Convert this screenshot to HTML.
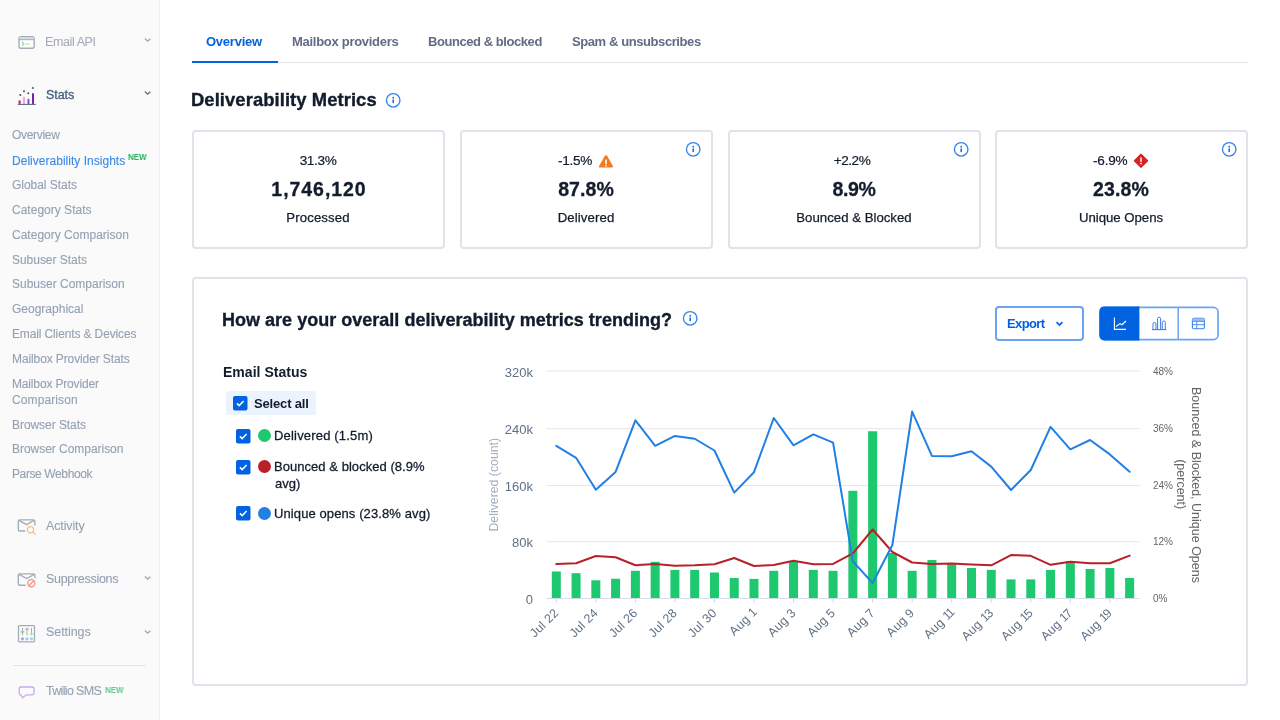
<!DOCTYPE html>
<html><head><meta charset="utf-8"><style>
html,body{margin:0;padding:0;width:1280px;height:720px;overflow:hidden;background:#fff;}
body{position:relative;font-family:"Liberation Sans",sans-serif;}
.t{position:absolute;white-space:nowrap;}
body>div,body>svg{will-change:transform;}
</style></head><body>
<div style="position:absolute;left:0px;top:0px;width:159px;height:720px;background:#fafafa;"></div>
<div style="position:absolute;left:159px;top:0px;width:1px;height:720px;background:#eceef2;"></div>
<svg style="position:absolute;left:17px;top:35px" width="19" height="16" viewBox="0 0 19 16"><rect x="2.05" y="1.7" width="15.1" height="11.6" rx="1.8" fill="#fff" stroke="#a3adb9" stroke-width="1.4"/><rect x="2.4" y="2.2" width="14.4" height="2.5" fill="#d6dbe1"/><line x1="1.6" y1="4.7" x2="17.6" y2="4.7" stroke="#a3adb9" stroke-width="1"/><path d="M4.8 6.8 L6.9 8.7 L4.8 10.6" fill="none" stroke="#93dcaa" stroke-width="1.3"/><line x1="8.8" y1="9" x2="12.7" y2="9" stroke="#cfe6a8" stroke-width="1.4"/></svg>
<div class="t" style="top:35.92px;font-size:12.5px;line-height:12.5px;color:#a3adba;letter-spacing:-0.400px;left:44.60px;-webkit-text-stroke-width:0.1px;">Email API</div>
<svg style="position:absolute;left:144px;top:37px" width="8" height="6" viewBox="0 0 8 6"><path d="M0.9 1.6 L3.6 4.2 L6.4 1.8" fill="none" stroke="#9ba6b4" stroke-width="1.35"/></svg>
<svg style="position:absolute;left:17px;top:86px" width="20" height="20" viewBox="0 0 20 20"><rect x="1.5" y="14.2" width="2.2" height="4" rx="1" fill="#f2245f"/><rect x="6" y="10.8" width="2" height="7.4" rx="1" fill="#e2a6ea"/><rect x="10.5" y="12.7" width="1.9" height="5.5" rx="0.9" fill="#7a44f5"/><rect x="15" y="7" width="2" height="11.2" rx="1" fill="#7b1fa8"/><circle cx="3.3" cy="9" r="1.05" fill="#4a5a6e"/><circle cx="7" cy="5.3" r="1.05" fill="#4a5a6e"/><circle cx="11.3" cy="7.2" r="1.05" fill="#4a5a6e"/><circle cx="15.8" cy="2" r="1.05" fill="#4a5a6e"/><line x1="0.8" y1="18.4" x2="18.8" y2="18.4" stroke="#4a5a6e" stroke-width="0.95"/></svg>
<div class="t" style="top:89.42px;font-size:12.5px;line-height:12.5px;color:#4b6080;letter-spacing:-0.059px;left:45.60px;-webkit-text-stroke-width:0.35px;">Stats</div>
<svg style="position:absolute;left:144px;top:90px" width="8" height="6" viewBox="0 0 8 6"><path d="M0.9 1.6 L3.6 4.2 L6.4 1.8" fill="none" stroke="#5b6c80" stroke-width="1.35"/></svg>
<div class="t" style="top:129.24px;font-size:12px;line-height:12px;color:#94a1b2;letter-spacing:-0.306px;left:11.80px;-webkit-text-stroke-width:0.12px;">Overview</div>
<div class="t" style="top:154.64px;font-size:12px;line-height:12px;color:#3d8ae6;letter-spacing:0.022px;left:11.80px;-webkit-text-stroke-width:0.12px;">Deliverability Insights</div>
<div class="t" style="top:179.04px;font-size:12px;line-height:12px;color:#94a1b2;letter-spacing:-0.033px;left:11.80px;-webkit-text-stroke-width:0.12px;">Global Stats</div>
<div class="t" style="top:203.84px;font-size:12px;line-height:12px;color:#94a1b2;letter-spacing:0.010px;left:11.80px;-webkit-text-stroke-width:0.12px;">Category Stats</div>
<div class="t" style="top:228.74px;font-size:12px;line-height:12px;color:#94a1b2;letter-spacing:0.011px;left:11.80px;-webkit-text-stroke-width:0.12px;">Category Comparison</div>
<div class="t" style="top:253.54px;font-size:12px;line-height:12px;color:#94a1b2;letter-spacing:-0.031px;left:11.80px;-webkit-text-stroke-width:0.12px;">Subuser Stats</div>
<div class="t" style="top:278.44px;font-size:12px;line-height:12px;color:#94a1b2;letter-spacing:-0.003px;left:11.80px;-webkit-text-stroke-width:0.12px;">Subuser Comparison</div>
<div class="t" style="top:303.24px;font-size:12px;line-height:12px;color:#94a1b2;letter-spacing:0.003px;left:11.80px;-webkit-text-stroke-width:0.12px;">Geographical</div>
<div class="t" style="top:328.14px;font-size:12px;line-height:12px;color:#94a1b2;letter-spacing:-0.131px;left:11.80px;-webkit-text-stroke-width:0.12px;">Email Clients &amp; Devices</div>
<div class="t" style="top:352.94px;font-size:12px;line-height:12px;color:#94a1b2;letter-spacing:-0.109px;left:11.80px;-webkit-text-stroke-width:0.12px;">Mailbox Provider Stats</div>
<div class="t" style="top:377.84px;font-size:12px;line-height:12px;color:#94a1b2;letter-spacing:-0.158px;left:11.80px;-webkit-text-stroke-width:0.12px;">Mailbox Provider</div>
<div class="t" style="top:393.74px;font-size:12px;line-height:12px;color:#94a1b2;letter-spacing:0.109px;left:11.80px;-webkit-text-stroke-width:0.12px;">Comparison</div>
<div class="t" style="top:418.54px;font-size:12px;line-height:12px;color:#94a1b2;letter-spacing:-0.057px;left:11.80px;-webkit-text-stroke-width:0.12px;">Browser Stats</div>
<div class="t" style="top:443.44px;font-size:12px;line-height:12px;color:#94a1b2;letter-spacing:-0.036px;left:11.80px;-webkit-text-stroke-width:0.12px;">Browser Comparison</div>
<div class="t" style="top:468.24px;font-size:12px;line-height:12px;color:#94a1b2;letter-spacing:-0.388px;left:11.80px;-webkit-text-stroke-width:0.12px;">Parse Webhook</div>
<div class="t" style="top:152.72px;font-size:8.6px;line-height:8.6px;color:#22b35e;font-weight:700;left:128.10px;transform:scaleX(0.92);transform-origin:0 0;">NEW</div>
<svg style="position:absolute;left:16px;top:517px" width="22" height="20" viewBox="0 0 22 20"><path d="M9.3 14 H3.8 Q2.3 14 2.3 12.5 V4.3 Q2.3 2.8 3.8 2.8 H17.3 Q18.8 2.8 18.8 4.3 V8.5" fill="none" stroke="#a3adb9" stroke-width="1.35"/><path d="M3 3.3 L10.5 7.7 L18 3.3" fill="none" stroke="#a3adb9" stroke-width="1.35"/><circle cx="14.5" cy="12.7" r="3.1" fill="none" stroke="#f7bf88" stroke-width="1.2"/><line x1="16.8" y1="15" x2="19.2" y2="17.3" stroke="#f7bf88" stroke-width="1.3" stroke-linecap="round"/></svg>
<div class="t" style="top:520.22px;font-size:12.5px;line-height:12.5px;color:#94a1b2;letter-spacing:-0.134px;left:45.60px;-webkit-text-stroke-width:0.1px;">Activity</div>
<svg style="position:absolute;left:16px;top:570px" width="22" height="20" viewBox="0 0 22 20"><path d="M9.7 15.2 H3.8 Q2.3 15.2 2.3 13.7 V5.3 Q2.3 3.8 3.8 3.8 H17.5 Q19 3.8 19 5.3 V8.2" fill="none" stroke="#a3adb9" stroke-width="1.35"/><path d="M3 4.3 L10.7 8.5 L18.3 4.3" fill="none" stroke="#a3adb9" stroke-width="1.35"/><circle cx="15.3" cy="13.3" r="3.6" fill="none" stroke="#f0917f" stroke-width="1.2"/><line x1="13.1" y1="15.5" x2="17.6" y2="11" stroke="#f0917f" stroke-width="1.2"/></svg>
<div class="t" style="top:573.42px;font-size:12.5px;line-height:12.5px;color:#94a1b2;letter-spacing:-0.299px;left:45.60px;-webkit-text-stroke-width:0.1px;">Suppressions</div>
<svg style="position:absolute;left:144px;top:575px" width="8" height="6" viewBox="0 0 8 6"><path d="M0.9 1.6 L3.6 4.2 L6.4 1.8" fill="none" stroke="#9ba6b4" stroke-width="1.35"/></svg>
<svg style="position:absolute;left:17px;top:624px" width="20" height="20" viewBox="0 0 20 20"><rect x="1.5" y="1.7" width="16" height="16.1" rx="0.8" fill="none" stroke="#a3adb9" stroke-width="1.3"/><line x1="5.5" y1="4" x2="5.5" y2="11.3" stroke="#a3adb9" stroke-width="1"/><line x1="10" y1="4" x2="10" y2="11.3" stroke="#a3adb9" stroke-width="1"/><line x1="14.5" y1="4" x2="14.5" y2="11.3" stroke="#a3adb9" stroke-width="1"/><rect x="3.4" y="7" width="4.2" height="1.7" rx="0.8" fill="#92d493"/><rect x="7.9" y="4.4" width="4.2" height="1.7" rx="0.8" fill="#92d493"/><rect x="12.4" y="8.9" width="4.2" height="1.7" rx="0.8" fill="#dce26f"/><circle cx="5.5" cy="14.8" r="1.6" fill="#aaa5e0"/><circle cx="10" cy="14.8" r="1.6" fill="#9ec9f4"/><circle cx="14.5" cy="14.8" r="1.6" fill="#93d9e6"/></svg>
<div class="t" style="top:626.42px;font-size:12.5px;line-height:12.5px;color:#94a1b2;letter-spacing:-0.074px;left:45.60px;-webkit-text-stroke-width:0.1px;">Settings</div>
<svg style="position:absolute;left:144px;top:629px" width="8" height="6" viewBox="0 0 8 6"><path d="M0.9 1.6 L3.6 4.2 L6.4 1.8" fill="none" stroke="#9ba6b4" stroke-width="1.35"/></svg>
<div style="position:absolute;left:13px;top:665px;width:133px;height:1px;background:#dfe4ea;"></div>
<svg style="position:absolute;left:18px;top:685px" width="18" height="15" viewBox="0 0 18 15"><path d="M2.7 2 H14.5 Q16 2 16 3.5 V8.3 Q16 9.8 14.5 9.8 H8.3 L4.5 12.7 L3 9.8 H2.7 Q1.2 9.8 1.2 8.3 V3.5 Q1.2 2 2.7 2 Z" fill="none" stroke="#c9a8f0" stroke-width="1.3" stroke-linejoin="round"/></svg>
<div class="t" style="top:684.62px;font-size:12.5px;line-height:12.5px;color:#94a1b2;letter-spacing:-0.675px;left:45.60px;-webkit-text-stroke-width:0.1px;">Twilio SMS</div>
<div class="t" style="top:685.52px;font-size:8.6px;line-height:8.6px;color:#63c98a;font-weight:700;left:104.90px;transform:scaleX(0.92);transform-origin:0 0;">NEW</div>
<div style="position:absolute;left:192px;top:62px;width:1056px;height:1px;background:#e1e3ea;"></div>
<div style="position:absolute;left:192px;top:61px;width:85.5px;height:2px;background:#0263e0;"></div>
<div class="t" style="top:35.30px;font-size:13px;line-height:13px;color:#0263e0;font-weight:700;letter-spacing:-0.243px;left:206.00px;">Overview</div>
<div class="t" style="top:35.30px;font-size:13px;line-height:13px;color:#606b85;font-weight:700;letter-spacing:-0.282px;left:292.20px;">Mailbox providers</div>
<div class="t" style="top:35.30px;font-size:13px;line-height:13px;color:#606b85;font-weight:700;letter-spacing:-0.438px;left:428.20px;">Bounced &amp; blocked</div>
<div class="t" style="top:35.30px;font-size:13px;line-height:13px;color:#606b85;font-weight:700;letter-spacing:-0.412px;left:572.30px;">Spam &amp; unsubscribes</div>
<div class="t" style="top:90.72px;font-size:18.4px;line-height:18.4px;color:#121c2d;font-weight:700;letter-spacing:0.078px;left:191.20px;-webkit-text-stroke-width:0.35px;">Deliverability Metrics</div>
<svg style="position:absolute;left:384.8px;top:91.8px" width="16" height="16" viewBox="0 0 16 16"><circle cx="8.2" cy="8.3" r="6.75" fill="none" stroke="#3584ea" stroke-width="1.35"/><circle cx="8.2" cy="5.7" r="0.85" fill="#0a63de"/><rect x="7.45" y="7.2" width="1.5" height="4" rx="0.7" fill="#0a63de"/></svg>
<div style="position:absolute;left:192px;top:130px;width:249px;height:115px;border:2px solid #e1e3ea;border-radius:4px;background:#fff"></div>
<div class="t" style="top:154.49px;font-size:13.6px;line-height:13.6px;color:#121c2d;letter-spacing:-0.364px;left:-181.88px;width:1000px;text-align:center;-webkit-text-stroke:0.2px #121c2d;">31.3%</div>
<div class="t" style="top:179.59px;font-size:19.5px;line-height:19.5px;color:#121c2d;font-weight:700;letter-spacing:0.949px;left:-181.33px;width:1000px;text-align:center;-webkit-text-stroke-width:0.3px;">1,746,120</div>
<div class="t" style="top:211.23px;font-size:13.2px;line-height:13.2px;color:#121c2d;letter-spacing:0.129px;left:-181.74px;width:1000px;text-align:center;-webkit-text-stroke:0.25px #121c2d;">Processed</div>
<div style="position:absolute;left:460px;top:130px;width:248.5px;height:115px;border:2px solid #e1e3ea;border-radius:4px;background:#fff"></div>
<div class="t" style="top:154.49px;font-size:13.6px;line-height:13.6px;color:#121c2d;letter-spacing:-0.281px;left:558.10px;-webkit-text-stroke:0.2px #121c2d;">-1.5%</div>
<svg style="position:absolute;left:598px;top:153.5px" width="16" height="14.5" viewBox="0 0 16 14.5"><path d="M8 1.6 Q8.6 1.1 9.1 1.7 L15 12.2 Q15.3 13.5 14 13.6 H2 Q0.7 13.5 1 12.2 L6.9 1.7 Q7.4 1.1 8 1.6 Z" fill="#f47a20"/><rect x="7.2" y="5.6" width="1.6" height="4.6" rx="0.5" fill="#fff"/><rect x="7.2" y="11" width="1.6" height="1.4" rx="0.4" fill="#fff"/></svg>
<div class="t" style="top:179.59px;font-size:19.5px;line-height:19.5px;color:#121c2d;font-weight:700;letter-spacing:0.062px;left:85.98px;width:1000px;text-align:center;-webkit-text-stroke-width:0.3px;">87.8%</div>
<div class="t" style="top:211.23px;font-size:13.2px;line-height:13.2px;color:#121c2d;letter-spacing:0.104px;left:86.00px;width:1000px;text-align:center;-webkit-text-stroke:0.25px #121c2d;">Delivered</div>
<svg style="position:absolute;left:685.0px;top:141.3px" width="16" height="16" viewBox="0 0 16 16"><circle cx="8.2" cy="8.3" r="6.75" fill="none" stroke="#3584ea" stroke-width="1.35"/><circle cx="8.2" cy="5.7" r="0.85" fill="#0a63de"/><rect x="7.45" y="7.2" width="1.5" height="4" rx="0.7" fill="#0a63de"/></svg>
<div style="position:absolute;left:728px;top:130px;width:248.5px;height:115px;border:2px solid #e1e3ea;border-radius:4px;background:#fff"></div>
<div class="t" style="top:154.49px;font-size:13.6px;line-height:13.6px;color:#121c2d;letter-spacing:-0.459px;left:351.62px;width:1000px;text-align:center;-webkit-text-stroke:0.2px #121c2d;">+2.2%</div>
<div class="t" style="top:179.59px;font-size:19.5px;line-height:19.5px;color:#121c2d;font-weight:700;letter-spacing:-0.369px;left:353.77px;width:1000px;text-align:center;-webkit-text-stroke-width:0.3px;">8.9%</div>
<div class="t" style="top:211.23px;font-size:13.2px;line-height:13.2px;color:#121c2d;letter-spacing:0.015px;left:353.96px;width:1000px;text-align:center;-webkit-text-stroke:0.25px #121c2d;">Bounced &amp; Blocked</div>
<svg style="position:absolute;left:953.0px;top:141.3px" width="16" height="16" viewBox="0 0 16 16"><circle cx="8.2" cy="8.3" r="6.75" fill="none" stroke="#3584ea" stroke-width="1.35"/><circle cx="8.2" cy="5.7" r="0.85" fill="#0a63de"/><rect x="7.45" y="7.2" width="1.5" height="4" rx="0.7" fill="#0a63de"/></svg>
<div style="position:absolute;left:995px;top:130px;width:249px;height:115px;border:2px solid #e1e3ea;border-radius:4px;background:#fff"></div>
<div class="t" style="top:154.49px;font-size:13.6px;line-height:13.6px;color:#121c2d;letter-spacing:-0.231px;left:1093.10px;-webkit-text-stroke:0.2px #121c2d;">-6.9%</div>
<svg style="position:absolute;left:1133.3px;top:153px" width="16" height="16" viewBox="0 0 16 16"><path d="M8 1.3 L14.6 7.8 L8 14.3 L1.4 7.8 Z" fill="#d9221f" stroke="#d9221f" stroke-width="1.2" stroke-linejoin="round"/><rect x="7.2" y="4.3" width="1.6" height="4.6" rx="0.6" fill="#fff"/><rect x="7.2" y="9.8" width="1.6" height="1.5" rx="0.5" fill="#fff"/></svg>
<div class="t" style="top:179.59px;font-size:19.5px;line-height:19.5px;color:#121c2d;font-weight:700;letter-spacing:0.187px;left:621.29px;width:1000px;text-align:center;-webkit-text-stroke-width:0.3px;">23.8%</div>
<div class="t" style="top:211.23px;font-size:13.2px;line-height:13.2px;color:#121c2d;letter-spacing:-0.020px;left:621.19px;width:1000px;text-align:center;-webkit-text-stroke:0.25px #121c2d;">Unique Opens</div>
<svg style="position:absolute;left:1220.5px;top:141.3px" width="16" height="16" viewBox="0 0 16 16"><circle cx="8.2" cy="8.3" r="6.75" fill="none" stroke="#3584ea" stroke-width="1.35"/><circle cx="8.2" cy="5.7" r="0.85" fill="#0a63de"/><rect x="7.45" y="7.2" width="1.5" height="4" rx="0.7" fill="#0a63de"/></svg>
<div style="position:absolute;left:192px;top:277px;width:1052px;height:405px;border:2px solid #e1e3ea;border-radius:4px;background:#fff"></div>
<div class="t" style="top:311.06px;font-size:18px;line-height:18px;color:#121c2d;font-weight:700;letter-spacing:0.016px;left:221.50px;-webkit-text-stroke-width:0.35px;">How are your overall deliverability metrics trending?</div>
<svg style="position:absolute;left:682.2px;top:310.4px" width="16" height="16" viewBox="0 0 16 16"><circle cx="8.2" cy="8.3" r="6.75" fill="none" stroke="#3584ea" stroke-width="1.35"/><circle cx="8.2" cy="5.7" r="0.85" fill="#0a63de"/><rect x="7.45" y="7.2" width="1.5" height="4" rx="0.7" fill="#0a63de"/></svg>
<div class="t" style="top:365.15px;font-size:14px;line-height:14px;color:#121c2d;font-weight:700;letter-spacing:0.024px;left:222.50px;">Email Status</div>
<div style="position:absolute;left:225.6px;top:391.4px;width:90.2px;height:24.4px;background:#ebf3fd;border-radius:3px;"></div>
<svg style="position:absolute;left:232.5px;top:396.2px" width="14.5" height="14.5" viewBox="0 0 14.5 14.5"><rect x="0" y="0" width="14.5" height="14.5" rx="2" fill="#0263e0"/><path d="M3.9 7.4 L6.2 9.6 L10.6 5.1" fill="none" stroke="#fff" stroke-width="1.5"/></svg>
<div class="t" style="top:397.30px;font-size:13px;line-height:13px;color:#121c2d;font-weight:700;letter-spacing:-0.167px;left:254.20px;">Select all</div>
<svg style="position:absolute;left:236.3px;top:428.8px" width="14.5" height="14.5" viewBox="0 0 14.5 14.5"><rect x="0" y="0" width="14.5" height="14.5" rx="2" fill="#0263e0"/><path d="M3.9 7.4 L6.2 9.6 L10.6 5.1" fill="none" stroke="#fff" stroke-width="1.5"/></svg>
<div style="position:absolute;left:257.5px;top:428.7px;width:13px;height:13px;border-radius:50%;background:#1dc86f"></div>
<div class="t" style="top:429.30px;font-size:13px;line-height:13px;color:#121c2d;-webkit-text-stroke-width:0.28px;letter-spacing:0.183px;left:274.00px;">Delivered (1.5m)</div>
<svg style="position:absolute;left:236.3px;top:459.5px" width="14.5" height="14.5" viewBox="0 0 14.5 14.5"><rect x="0" y="0" width="14.5" height="14.5" rx="2" fill="#0263e0"/><path d="M3.9 7.4 L6.2 9.6 L10.6 5.1" fill="none" stroke="#fff" stroke-width="1.5"/></svg>
<div style="position:absolute;left:257.5px;top:459.8px;width:13px;height:13px;border-radius:50%;background:#b8202a"></div>
<div class="t" style="top:460.30px;font-size:13px;line-height:13px;color:#121c2d;-webkit-text-stroke-width:0.28px;letter-spacing:0.044px;left:274.00px;">Bounced &amp; blocked (8.9%</div>
<svg style="position:absolute;left:236.3px;top:505.8px" width="14.5" height="14.5" viewBox="0 0 14.5 14.5"><rect x="0" y="0" width="14.5" height="14.5" rx="2" fill="#0263e0"/><path d="M3.9 7.4 L6.2 9.6 L10.6 5.1" fill="none" stroke="#fff" stroke-width="1.5"/></svg>
<div style="position:absolute;left:257.5px;top:506.5px;width:13px;height:13px;border-radius:50%;background:#2180e4"></div>
<div class="t" style="top:506.50px;font-size:13px;line-height:13px;color:#121c2d;-webkit-text-stroke-width:0.28px;letter-spacing:0.104px;left:274.00px;">Unique opens (23.8% avg)</div>
<div class="t" style="top:476.60px;font-size:13px;line-height:13px;color:#121c2d;-webkit-text-stroke-width:0.28px;left:275.00px;">avg)</div>
<div style="position:absolute;left:995px;top:306px;width:85px;height:31px;border:2px solid #6ba4f0;border-radius:4px;background:#fff"></div>
<div class="t" style="top:316.80px;font-size:13px;line-height:13px;color:#0263e0;font-weight:700;letter-spacing:-0.608px;left:1007.20px;">Export</div>
<svg style="position:absolute;left:1055px;top:320px" width="9" height="8" viewBox="0 0 9 8"><path d="M1.6 2.2 L4.5 5.1 L7.4 2.2" fill="none" stroke="#0263e0" stroke-width="1.7"/></svg>
<svg style="position:absolute;left:1098px;top:305px" width="122" height="37" viewBox="0 0 122 37"><rect x="2.15" y="2.45" width="117.9" height="32.1" rx="4.6" fill="#fff" stroke="#6ba4f0" stroke-width="1.7"/><path d="M1.3 7 Q1.3 1.6 6.5 1.6 H41.4 V35.4 H6.5 Q1.3 35.4 1.3 30 Z" fill="#0263e0"/><line x1="80.2" y1="2" x2="80.2" y2="35" stroke="#6ba4f0" stroke-width="1.5"/><path d="M16.4 12.5 V24.4 H28" fill="none" stroke="#fff" stroke-width="1.1"/><path d="M18 21.6 L22 18.6 L24 19.8 L28 16" fill="none" stroke="#fff" stroke-width="1.2"/><path d="M54 24.6 H68.4" stroke="#3b82e6" stroke-width="1.1"/><path d="M55 24.4 V18.9 Q55 17.4 56.5 17.4 Q58 17.4 58 18.9 V24.4 M59.6 24.4 V13.7 Q59.6 12.2 61.1 12.2 Q62.6 12.2 62.6 13.7 V24.4 M64.3 24.4 V17.4 Q64.3 15.9 65.8 15.9 Q67.3 15.9 67.3 17.4 V24.4" fill="none" stroke="#3b82e6" stroke-width="1"/><rect x="94.4" y="13.4" width="12" height="10.4" rx="1.6" fill="none" stroke="#3b82e6" stroke-width="1.1"/><rect x="94.4" y="13.4" width="12" height="2.8" fill="#9cc3f5"/><path d="M94.4 16.3 H106.4 M94.4 19.7 H106.4 M98.8 16.3 V23.8" fill="none" stroke="#3b82e6" stroke-width="0.9"/></svg>
<svg style="position:absolute;left:0;top:0" width="1280" height="720" viewBox="0 0 1280 720"><line x1="546.5" y1="371" x2="1139.7" y2="371" stroke="#e6e6e6" stroke-width="1"/><line x1="546.5" y1="428.7" x2="1139.7" y2="428.7" stroke="#e6e6e6" stroke-width="1"/><line x1="546.5" y1="485.6" x2="1139.7" y2="485.6" stroke="#e6e6e6" stroke-width="1"/><line x1="546.5" y1="541.7" x2="1139.7" y2="541.7" stroke="#e6e6e6" stroke-width="1"/><rect x="551.80" y="571.5" width="9" height="26.70" fill="#1dc86f"/><rect x="571.57" y="573.2" width="9" height="25.00" fill="#1dc86f"/><rect x="591.34" y="580.3" width="9" height="17.90" fill="#1dc86f"/><rect x="611.11" y="578.75" width="9" height="19.45" fill="#1dc86f"/><rect x="630.88" y="570.8" width="9" height="27.40" fill="#1dc86f"/><rect x="650.65" y="561.8" width="9" height="36.40" fill="#1dc86f"/><rect x="670.42" y="569.9" width="9" height="28.30" fill="#1dc86f"/><rect x="690.19" y="569.9" width="9" height="28.30" fill="#1dc86f"/><rect x="709.96" y="572.5" width="9" height="25.70" fill="#1dc86f"/><rect x="729.73" y="578" width="9" height="20.20" fill="#1dc86f"/><rect x="749.50" y="578.9" width="9" height="19.30" fill="#1dc86f"/><rect x="769.27" y="570.8" width="9" height="27.40" fill="#1dc86f"/><rect x="789.04" y="562" width="9" height="36.20" fill="#1dc86f"/><rect x="808.81" y="569.9" width="9" height="28.30" fill="#1dc86f"/><rect x="828.58" y="570.8" width="9" height="27.40" fill="#1dc86f"/><rect x="848.35" y="490.8" width="9" height="107.40" fill="#1dc86f"/><rect x="868.12" y="431.25" width="9" height="166.95" fill="#1dc86f"/><rect x="887.89" y="553" width="9" height="45.20" fill="#1dc86f"/><rect x="907.66" y="570.8" width="9" height="27.40" fill="#1dc86f"/><rect x="927.43" y="560" width="9" height="38.20" fill="#1dc86f"/><rect x="947.20" y="564.2" width="9" height="34.00" fill="#1dc86f"/><rect x="966.97" y="568" width="9" height="30.20" fill="#1dc86f"/><rect x="986.74" y="569.9" width="9" height="28.30" fill="#1dc86f"/><rect x="1006.51" y="579.4" width="9" height="18.80" fill="#1dc86f"/><rect x="1026.28" y="579.4" width="9" height="18.80" fill="#1dc86f"/><rect x="1046.05" y="569.9" width="9" height="28.30" fill="#1dc86f"/><rect x="1065.82" y="561.1" width="9" height="37.10" fill="#1dc86f"/><rect x="1085.59" y="569" width="9" height="29.20" fill="#1dc86f"/><rect x="1105.36" y="568" width="9" height="30.20" fill="#1dc86f"/><rect x="1125.13" y="578" width="9" height="20.20" fill="#1dc86f"/><line x1="546.5" y1="598.5" x2="1139.7" y2="598.5" stroke="#d5dcea" stroke-width="1"/><line x1="556.30" y1="598.5" x2="556.30" y2="602.5" stroke="#ccd6eb" stroke-width="1"/><line x1="595.84" y1="598.5" x2="595.84" y2="602.5" stroke="#ccd6eb" stroke-width="1"/><line x1="635.38" y1="598.5" x2="635.38" y2="602.5" stroke="#ccd6eb" stroke-width="1"/><line x1="674.92" y1="598.5" x2="674.92" y2="602.5" stroke="#ccd6eb" stroke-width="1"/><line x1="714.46" y1="598.5" x2="714.46" y2="602.5" stroke="#ccd6eb" stroke-width="1"/><line x1="754.00" y1="598.5" x2="754.00" y2="602.5" stroke="#ccd6eb" stroke-width="1"/><line x1="793.54" y1="598.5" x2="793.54" y2="602.5" stroke="#ccd6eb" stroke-width="1"/><line x1="833.08" y1="598.5" x2="833.08" y2="602.5" stroke="#ccd6eb" stroke-width="1"/><line x1="872.62" y1="598.5" x2="872.62" y2="602.5" stroke="#ccd6eb" stroke-width="1"/><line x1="912.16" y1="598.5" x2="912.16" y2="602.5" stroke="#ccd6eb" stroke-width="1"/><line x1="951.70" y1="598.5" x2="951.70" y2="602.5" stroke="#ccd6eb" stroke-width="1"/><line x1="991.24" y1="598.5" x2="991.24" y2="602.5" stroke="#ccd6eb" stroke-width="1"/><line x1="1030.78" y1="598.5" x2="1030.78" y2="602.5" stroke="#ccd6eb" stroke-width="1"/><line x1="1070.32" y1="598.5" x2="1070.32" y2="602.5" stroke="#ccd6eb" stroke-width="1"/><line x1="1109.86" y1="598.5" x2="1109.86" y2="602.5" stroke="#ccd6eb" stroke-width="1"/><polyline points="556.30,563.9 576.07,563.2 595.84,556 615.61,557.2 635.38,565.3 655.15,563.9 674.92,565.7 694.69,565.3 714.46,564.2 734.23,558 754.00,566 773.77,565 793.54,560.8 813.31,564.2 833.08,563.9 852.85,553.3 872.62,529.5 892.39,552 912.16,562.5 931.93,563.9 951.70,563.6 971.47,564.6 991.24,565.3 1011.01,555.1 1030.78,555.8 1050.55,564.8 1070.32,561.8 1090.09,563.2 1109.86,563.2 1129.63,555.6" fill="none" stroke="#b8202a" stroke-width="2" stroke-linejoin="round" stroke-linecap="round"/><polyline points="556.30,445.8 576.07,457.8 595.84,489.8 615.61,471.9 635.38,420.3 655.15,445.8 674.92,435.9 694.69,438.75 714.46,450.5 734.23,492.65 754.00,472.2 773.77,418 793.54,445.3 813.31,434.4 833.08,442.7 852.85,561.3 872.62,583 892.39,545 912.16,411.6 931.93,455.9 951.70,456.25 971.47,451.2 991.24,466.6 1011.01,490 1030.78,470 1050.55,426.8 1070.32,449.3 1090.09,440 1109.86,454.4 1129.63,471.8" fill="none" stroke="#2180e4" stroke-width="2" stroke-linejoin="round" stroke-linecap="round"/><text x="533" y="376.5" text-anchor="end" font-family="Liberation Sans" font-size="13" fill="#5f7186">320k</text><text x="533" y="434.2" text-anchor="end" font-family="Liberation Sans" font-size="13" fill="#5f7186">240k</text><text x="533" y="491.1" text-anchor="end" font-family="Liberation Sans" font-size="13" fill="#5f7186">160k</text><text x="533" y="547.2" text-anchor="end" font-family="Liberation Sans" font-size="13" fill="#5f7186">80k</text><text x="533" y="604.0" text-anchor="end" font-family="Liberation Sans" font-size="13" fill="#5f7186">0</text><text x="1153" y="374.6" font-family="Liberation Sans" font-size="10" fill="#666666">48%</text><text x="1153" y="432.3" font-family="Liberation Sans" font-size="10" fill="#666666">36%</text><text x="1153" y="489.20000000000005" font-family="Liberation Sans" font-size="10" fill="#666666">24%</text><text x="1153" y="545.3000000000001" font-family="Liberation Sans" font-size="10" fill="#666666">12%</text><text x="1153" y="602.1" font-family="Liberation Sans" font-size="10" fill="#666666">0%</text><text transform="translate(497.9,484.7) rotate(-90)" text-anchor="middle" font-family="Liberation Sans" font-size="12.3" fill="#a0adbe">Delivered (count)</text><text transform="translate(1192.2,485) rotate(90)" text-anchor="middle" font-family="Liberation Sans" font-size="12.5" fill="#666666">Bounced &amp; Blocked, Unique Opens</text><text transform="translate(1177.2,484.2) rotate(90)" text-anchor="middle" font-family="Liberation Sans" font-size="12.5" fill="#666666">(percent)</text><text transform="translate(559.30,613.6) rotate(-45)" text-anchor="end" font-family="Liberation Sans" font-size="12.4" letter-spacing="0.25" fill="#5f7186">Jul 22</text><text transform="translate(598.84,613.6) rotate(-45)" text-anchor="end" font-family="Liberation Sans" font-size="12.4" letter-spacing="0.25" fill="#5f7186">Jul 24</text><text transform="translate(638.38,613.6) rotate(-45)" text-anchor="end" font-family="Liberation Sans" font-size="12.4" letter-spacing="0.25" fill="#5f7186">Jul 26</text><text transform="translate(677.92,613.6) rotate(-45)" text-anchor="end" font-family="Liberation Sans" font-size="12.4" letter-spacing="0.25" fill="#5f7186">Jul 28</text><text transform="translate(717.46,613.6) rotate(-45)" text-anchor="end" font-family="Liberation Sans" font-size="12.4" letter-spacing="0.25" fill="#5f7186">Jul 30</text><text transform="translate(757.00,613.6) rotate(-45)" text-anchor="end" font-family="Liberation Sans" font-size="12.4" letter-spacing="0.25" fill="#5f7186">Aug <tspan letter-spacing="-1.4">1</tspan></text><text transform="translate(796.54,613.6) rotate(-45)" text-anchor="end" font-family="Liberation Sans" font-size="12.4" letter-spacing="0.25" fill="#5f7186">Aug 3</text><text transform="translate(836.08,613.6) rotate(-45)" text-anchor="end" font-family="Liberation Sans" font-size="12.4" letter-spacing="0.25" fill="#5f7186">Aug 5</text><text transform="translate(875.62,613.6) rotate(-45)" text-anchor="end" font-family="Liberation Sans" font-size="12.4" letter-spacing="0.25" fill="#5f7186">Aug 7</text><text transform="translate(915.16,613.6) rotate(-45)" text-anchor="end" font-family="Liberation Sans" font-size="12.4" letter-spacing="0.25" fill="#5f7186">Aug 9</text><text transform="translate(954.70,613.6) rotate(-45)" text-anchor="end" font-family="Liberation Sans" font-size="12.4" letter-spacing="0.25" fill="#5f7186">Aug <tspan letter-spacing="-1.4">1</tspan><tspan letter-spacing="-1.4">1</tspan></text><text transform="translate(994.24,613.6) rotate(-45)" text-anchor="end" font-family="Liberation Sans" font-size="12.4" letter-spacing="0.25" fill="#5f7186">Aug <tspan letter-spacing="-1.4">1</tspan>3</text><text transform="translate(1033.78,613.6) rotate(-45)" text-anchor="end" font-family="Liberation Sans" font-size="12.4" letter-spacing="0.25" fill="#5f7186">Aug <tspan letter-spacing="-1.4">1</tspan>5</text><text transform="translate(1073.32,613.6) rotate(-45)" text-anchor="end" font-family="Liberation Sans" font-size="12.4" letter-spacing="0.25" fill="#5f7186">Aug <tspan letter-spacing="-1.4">1</tspan>7</text><text transform="translate(1112.86,613.6) rotate(-45)" text-anchor="end" font-family="Liberation Sans" font-size="12.4" letter-spacing="0.25" fill="#5f7186">Aug <tspan letter-spacing="-1.4">1</tspan>9</text></svg>
</body></html>
